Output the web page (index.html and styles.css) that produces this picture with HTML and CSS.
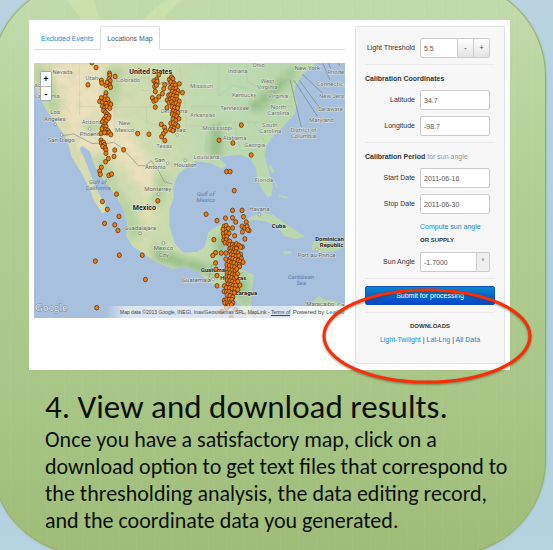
FILE: index.html
```html
<!DOCTYPE html>
<html lang="en">
<head>
<meta charset="utf-8">
<title>View and download results</title>
<link rel="stylesheet" href="styles.css">
</head>
<body>
<main class="card">
  <svg class="leaf" viewBox="0 0 140 40" aria-hidden="true">
    <path d="M5 0 Q22 20 30 40 L50 40 Q36 20 32 0Z M105 0 Q80 14 72 40 L95 40 Q98 16 120 0Z"/>
  </svg>
  <section class="panel">
    <div class="results">
      <nav class="tabs">
        <a class="tab" href="#events">Excluded Events</a>
        <a class="tab active" href="#map">Locations Map</a>
      </nav>
      <div class="map" id="map">
        <svg class="chart" viewBox="96 177 882 724" role="img" aria-label="Locations map">
          <defs>
            <clipPath id="land"><path d="M96 177H898L880 194 858 208 850 226 838 240 834 262 842 290 836 322 812 346 790 370 768 392 753 418 750 440 762 484 773 526 770 552 760 560 745 540 728 505 726 474 708 447 680 437 650 440 620 446 642 466 628 477 600 462 556 456 530 471 504 494 491 526 492 560 480 592 480 640 496 690 520 715 560 712 580 698 592 654 628 634 654 632 656 660 636 700 620 735 612 762 640 766 690 765 720 778 712 830 710 870 716 901H696L684 868 650 824 592 798 560 770 529 755 491 761 444 742 378 699 359 671 360 628 348 585 318 540 290 503 268 470 254 428 232 411 225 420 238 446 253 483 268 522 283 552 297 576 302 597 290 604 265 565 256 538 227 482 203 444 190 395 175 372 156 345 132 312 113 274 96 238Z"/><path d="M694 628 714 611 742 600 776 609 806 630 844 656 866 669 840 676 806 668 790 646 754 626 718 622ZM886 684 918 680 944 692 968 704 944 712 900 714 884 706ZM800 712 824 710 828 718 808 720ZM866 890 882 862 904 836 916 848 948 852 978 870V901H868ZM768 466l10 20-8 4-8-20ZM780 512l8 20-7-4ZM792 552l24 4-2 5-24-5Z"/></clipPath>
            <filter id="soft" x="-20%" y="-20%" width="140%" height="140%"><feGaussianBlur stdDeviation="11"/></filter>
            <filter id="relief" x="0" y="0" width="100%" height="100%">
              <feTurbulence type="fractalNoise" baseFrequency="0.035" numOctaves="4" seed="8"/>
              <feColorMatrix values="0 0 0 0 .52  0 0 0 0 .66  0 0 0 0 .42  0 0 2.6 0 -1.15"/>
            </filter>
            <linearGradient id="east"><stop offset="0" stop-color="#dfdcb4"/><stop offset=".38" stop-color="#cfdcaf"/><stop offset=".6" stop-color="#bddab0"/><stop offset="1" stop-color="#b6d5ab"/></linearGradient>
            <marker id="fix" markerUnits="userSpaceOnUse" markerWidth="18" markerHeight="18" refX="9" refY="9"><ellipse cx="9" cy="9" rx="5.8" ry="6.6"/></marker>
          </defs>
          <path fill="#a6c0de" d="M96 177H978V901H96Z"/>
          <g clip-path="url(#land)">
            <path fill="url(#east)" d="M96 177H978V901H96Z"/>
            <g filter="url(#soft)">
              <path fill="#ebe1bd" d="M150 177H300L290 260 330 330 390 400 440 480 450 560 400 540 350 470 300 430 220 420 180 340 160 260Z"/>
              <path fill="#b5d19c" d="M96 177 140 200 175 300 150 330 96 240ZM300 190 350 190 340 260 320 310 290 300ZM240 340 300 350 280 380 230 360ZM290 430 330 520 380 600 400 660 370 690 330 560 270 460ZM440 490 480 500 460 580 430 570Z"/>
              <path fill="#e2ddb4" d="M400 560 440 590 440 640 400 620ZM230 440 275 560 295 600 260 560Z"/>
              <path fill="#97c089" d="M700 300 780 230 830 190 840 205 790 265 730 320ZM430 690 520 730 600 750 640 790 560 770 440 740ZM610 680 640 650 650 700 620 750ZM630 780 700 780 705 870 670 840ZM600 350 630 350 630 440 590 440Z"/>
            </g>
            <path d="M96 177H978V901H96Z" filter="url(#relief)" opacity=".4"/>
          </g>
          <g class="borders">
            <path d="M173 384 208 378 260 405 303 405 322 402 345 418 372 446 392 468 412 468 428 454 450 484 466 514 488 520"/>
            <path d="M590 798 600 750 612 748M622 815 650 790 690 770M584 800 612 780"/>
          </g>
          <g class="states">
            <path d="M140 177V245L205 325M225 177V325M225 300 303 302V405M303 220V302H450M325 220H425V302M325 302V400M425 285H510M415 302V345L470 360 530 375M400 255H520M510 190 525 300 530 375M540 300H625M540 355H590L580 425M620 345V440M665 345 680 425M620 345H790M640 300H830M620 177V270L660 240 700 250M700 177V230L740 250M680 425H730M720 345 750 400"/>
          </g>
          <g class="leaders"><path d="M915 177 935 225M930 177 938 192M856 208 916 264M848 226 906 304M833 226 900 328M822 224 854 358M958 177 964 184"/></g>
          <g class="places">
            <text x="177" y="207">Nevada</text><text x="260" y="225">Utah</text><text x="363" y="231">Colorado</text><text x="132" y="276">California</text>
            <text x="674" y="205">Indiana</text><text x="733" y="187">Ohio</text><text x="571" y="247">Missouri</text><text x="758" y="234">West</text><text x="758" y="252">Virginia</text>
            <text x="692" y="273">Kentucky</text><text x="788" y="277">Virginia</text><text x="665" y="310">Tennessee</text><text x="789" y="307">North</text><text x="789" y="325">Carolina</text>
            <text x="574" y="329">Arkansas</text><text x="493" y="320">Oklahoma</text><text x="462" y="240">Kansas</text><text x="616" y="367">Mississippi</text><text x="765" y="358">South</text><text x="766" y="375">Carolina</text>
            <text x="665" y="396">Alabama</text><text x="722" y="416">Georgia</text><text x="585" y="448">Louisiana</text><text x="748" y="515">Florida</text><text x="465" y="418">Texas</text>
            <text x="260" y="349">Arizona</text><text x="353" y="354">New</text><text x="353" y="372">Mexico</text>
            <text x="952" y="209">Rhode</text><text x="937" y="241">Connectic.</text><text x="940" y="277">New Jers</text><text x="937" y="314">Delaware</text><text x="911" y="343">Maryland</text><text x="860" y="372">District of</text><text x="860" y="390">Columbia</text>
            <text x="712" y="892">Costa Rica</text>
          </g>
          <g class="places cities">
            <text x="871" y="196">New York</text><text x="156" y="321">Los</text><text x="155" y="341">Angeles</text><text x="173" y="402">San Diego</text><text x="256" y="385">Phoenix</text><text x="503" y="372">Dallas</text>
            <text x="453" y="457">San</text><text x="440" y="477">Antonio</text><text x="525" y="473">Houston</text><text x="447" y="540">Monterrey</text><text x="397" y="652">Guadalajara</text><text x="463" y="707">Mexico</text><text x="464" y="726">City</text>
            <text x="735" y="598">Havana</text><text x="897" y="726">Port-au-Prince</text><text x="557" y="797">Guatemala</text><text x="908" y="866">Maracaibo</text><text x="966" y="868">Ca</text><text x="106" y="246">sc</text>
          </g>
          <g class="places water">
            <text x="277" y="520">Gulf of</text><text x="278" y="538">California</text><text x="583" y="553">Gulf of</text><text x="583" y="571">Mexico</text><text x="853" y="790">Caribbean</text><text x="854" y="808">Sea</text>
          </g>
          <g class="places country">
            <text x="427" y="209" class="large">United States</text><text x="409" y="595" class="large">Mexico</text><text x="790" y="645">Cuba</text><text x="934" y="681">Dominican</text><text x="940" y="699">Republic</text><text x="610" y="769">Guatemala</text><text x="661" y="792">Honduras</text><text x="690" y="834">Nicaragua</text>
          </g>
          <g class="towns"><circle cx="156" cy="351" r="4"/><circle cx="174" cy="381" r="4"/><circle cx="254" cy="364" r="4"/><circle cx="475" cy="461" r="4"/><circle cx="525" cy="453" r="4"/><circle cx="502" cy="380" r="4"/><circle cx="449" cy="549" r="4"/><circle cx="397" cy="660" r="4"/><circle cx="463" cy="687" r="4"/><circle cx="735" cy="607" r="4"/><circle cx="898" cy="706" r="4"/><circle cx="604" cy="790" r="4"/></g>
          <text class="logo" x="99" y="881">Google</text>
          <path class="fixes" d="M260 176 272 190 249 239 326 215 310 206 311 212 309 222 312 228 307 235 311 240 313 246 300 240 287 226 288 234 303 232 300 262 298 272 287 276 282 286 290 288 297 282 305 280 309 290 314 294 300 292 290 300 296 304 303 300 311 305 293 312 299 317 304 322 309 327 300 329 307 334 294 337 300 342 290 344 297 350 292 358 300 357 289 364 299 366 305 368 303 375 309 374 314 380 286 377 296 374 286 396 287 404 293 402 296 409 291 414 298 418 300 424 325 424 350 423 300 433 323 442 307 448 299 457 287 473 282 484 284 493 308 496 316 492 330 549 290 570 304 592 337 612 296 632 325 636 334 652 338 722 403 722 270 739 412 791 274 871 447 568 390 377 422 379"/>
          <path class="fixes" d="M450 210 444 223 436 228 442 234 445 229 438 244 443 240 440 258 432 276 450 273 436 285 442 282 440 302 464 250 460 264 467 238 480 224 486 217 490 222 484 231 493 234 488 241 497 240 508 236 482 247 491 250 499 249 504 256 488 258 496 260 502 264 517 261 478 268 484 267 491 270 499 272 474 282 482 280 488 278 495 281 502 282 508 286 479 290 486 288 492 293 499 291 505 296 488 302 495 304 503 305 473 304 491 313 498 316 504 318 488 322 495 325 501 328 507 335 490 336 498 340 484 348 491 347 498 351 504 356 486 360 492 363 483 366 490 369 457 351 466 360 469 370 463 378 458 386 467 397"/>
          <path class="fixes" d="M684 353 621 396 660 404 712 438 642 485 652 485 664 539 584 606 615 624 659 595 686 595 639 617 659 616 690 613 668 628 698 628 686 640 694 644 700 640 706 652 702 650 687 656 694 676 687 699 665 667 606 678 635 640 641 638 647 646 659 645 632 649 633 661 641 657 649 660 635 670 643 669 634 680 641 679 638 687 646 688 651 683 651 693 659 692 665 695 670 690 677 694 682 699 611 715 603 723 627 716 611 744 612 762 615 780 615 809 640 716 640 733 651 704 658 702 664 705 670 703 653 712 660 714 668 713 675 716 682 720 655 721 662 723 669 725 677 724 684 731 653 731 660 732 667 735 675 737 681 740 689 742 649 740 656 744 663 744 671 748 678 749 643 749 650 752 658 754 665 756 679 754 643 761 651 763 658 765 666 767 671 761 644 772 652 773 659 776 666 778 673 775 643 782 650 784 657 786 664 789 670 784 644 793 651 795 658 797 666 799 674 796 680 807 646 804 654 806 661 808 668 808 636 809 642 814 650 815 658 817 666 818 674 820 635 825 642 826 649 826 657 829 664 829 644 835 652 837 660 841 636 850 643 848 650 848 657 848 637 857 645 858 652 858 660 857 642 868 648 865 656 863 642 872 629 882 668 877 656 900"/>
        </svg>
        <div class="zoom">
          <button type="button" aria-label="Zoom in">+</button>
          <button type="button" aria-label="Zoom out">-</button>
        </div>
        <div class="attribution">
          <span class="data">Map data ©2013 Google, INEGI, Inav/Geosistemas SRL, MapLink - <a href="#terms">Terms of</a></span>
          <span class="powered">Powered by <a href="#leaflet">Leaflet</a></span>
        </div>
      </div>
    </div>
    <form class="settings">
      <div class="row">
        <label for="threshold">Light Threshold</label>
        <div class="group"><input id="threshold" value="5.5"><button type="button" class="step">-</button><button type="button" class="step last">+</button></div>
      </div>
      <hr>
      <h2>Calibration Coordinates</h2>
      <div class="row"><label for="lat">Latitude</label><input id="lat" value="34.7"></div>
      <div class="row"><label for="lng">Longitude</label><input id="lng" value="-98.7"></div>
      <hr>
      <h2>Calibration Period <small>for sun angle</small></h2>
      <div class="row"><label for="start">Start Date</label><input id="start" value="2011-06-16"></div>
      <div class="row"><label for="stop">Stop Date</label><input id="stop" value="2011-06-30"></div>
      <div class="supply"><a href="#compute">Compute sun angle</a><strong>OR SUPPLY</strong></div>
      <div class="row">
        <label for="angle">Sun Angle</label>
        <div class="group"><input id="angle" value="-1.7000"><span class="unit">°</span></div>
      </div>
      <hr>
      <button type="submit" class="submit">Submit for processing</button>
      <hr>
      <div class="downloads">
        <strong>DOWNLOADS</strong>
        <div><a href="#light">Light-Twilight</a> | <a href="#latlng">Lat-Lng</a> | <a href="#all">All Data</a></div>
      </div>
      <svg class="ring" viewBox="0 0 212 100" aria-hidden="true"><ellipse cx="106" cy="49" rx="103" ry="46"/></svg>
    </form>
  </section>
  <section class="caption">
    <h1>4. View and download results.</h1>
    <p>Once you have a satisfactory map, click on a download option to get text files that correspond to the thresholding analysis, the data editing record, and the coordinate data you generated.</p>
  </section>
</main>
</body>
</html>
```
FILE: styles.css
```css
* { box-sizing: border-box; }

body {
  margin: 0;
  min-height: 100vh;
  overflow: hidden;
  background: linear-gradient(#b9d3e0, #acd0dc 50%, #b4d2df);
  font: 7px/10px "Liberation Sans", Arial, sans-serif;
  color: #333;
}

.card {
  position: relative;
  margin: -19px 7px -5px -9px;
  min-height: calc(100vh + 24px);
  padding: 38px 35px 0 37px;
  border: 1px solid #93ad66;
  border-radius: 95px;
  background:
    repeating-linear-gradient(90deg, rgb(255 255 255 / 5%) 0 1px, transparent 1px 18px),
    linear-gradient(#c3dbae, #b2d094 35%, #a9c788 68%, #9fbc78);
  box-shadow: 0 0 2px #8fa66a;
}

.leaf {
  position: absolute;
  top: 18px;
  left: 70px;
  width: 140px;
  fill: #d2e3ae;
  opacity: .7;
}

.panel {
  position: relative;
  display: flex;
  gap: 10px;
  padding: 6px 5px;
  background: #fff;
}

.results { flex: 1; min-width: 0; }

a { color: #1689cc; text-decoration: none; }

.tabs {
  display: flex;
  height: 24px;
  margin-bottom: 13px;
  border-bottom: 1px solid #ddd;
}

.tab { height: 24px; padding: 7px 6px; border: 1px solid transparent; }

.tab.active {
  color: #555;
  background: #fff;
  border-color: #ddd #ddd #fff;
  border-radius: 2px 2px 0 0;
}

.map { position: relative; overflow: hidden; }
.chart { display: block; width: 100%; }

.borders path { fill: none; stroke: #8f9483; stroke-width: 2; }
.states path { fill: none; stroke: #a2ab93; stroke-width: 1; opacity: .6; }
.leaders path { fill: none; stroke: #7b8589; stroke-width: 2; }

.places {
  font: 17px Roboto, sans-serif;
  text-anchor: middle;
  fill: #6d726e;
  stroke: #f2f4ea;
  stroke-opacity: .65;
  stroke-width: 3px;
  paint-order: stroke;
}

.cities { fill: #5f625e; }
.water { font-style: italic; fill: #5b7ca9; stroke: none; }
.country { font-weight: 700; fill: #222; }
.large { font-size: 20px; }
.towns circle { fill: #eee; stroke: #777; stroke-width: 1.5px; }

.logo {
  font: 31px "Liberation Serif", serif;
  fill: #dfe8f2;
  stroke: #7f8ea2;
  stroke-width: 3px;
  paint-order: stroke;
}

.fixes { fill: none; marker: url(#fix); }
#fix ellipse { fill: #f27d0c; stroke: #4a2c0a; stroke-width: 2px; }

.zoom {
  position: absolute;
  top: 8px;
  left: 6px;
  width: 12px;
  border: 1px solid #aaa;
  border-radius: 2px;
  overflow: hidden;
}

.zoom button {
  display: block;
  width: 100%;
  height: 14px;
  padding: 0;
  border: 0;
  background: #fff;
  font: bold 9px/12px "Liberation Sans", sans-serif;
  color: #000;
}

.zoom button + button { border-top: 1px solid #bbb; }

.attribution {
  position: absolute;
  right: 0;
  bottom: 0;
  left: 72px;
  display: flex;
  height: 12px;
  background: linear-gradient(90deg, transparent, rgb(255 255 255 / 60%) 20px);
  line-height: 12px;
  white-space: nowrap;
  color: #444;
}

.data { flex: 1; padding-left: 14px; font-size: 5px; }
.data a { color: #444; text-decoration: underline; }
.powered { padding: 0 1px 0 2px; background: rgb(255 255 255 / 60%); font-size: 6px; }

.settings {
  position: relative;
  width: 150px;
  padding: 11px 9px 18px;
  border: 1px solid #e3e3e3;
  border-radius: 2px;
  background: #f7f7f7;
}

.row {
  display: grid;
  grid-template-columns: 50px 70px;
  gap: 5px;
  align-items: center;
  margin-bottom: 6px;
  text-align: right;
}

.row label { white-space: nowrap; }

input {
  width: 100%;
  min-width: 0;
  height: 20px;
  padding: 0 3px;
  border: 1px solid #ccc;
  border-radius: 2px;
  background: #fff;
  font: inherit;
  color: #555;
}

.group { display: flex; }
.group input { flex: 1; border-radius: 2px 0 0 2px; }

.step, .unit {
  width: 16px;
  height: 20px;
  padding: 0;
  border: 1px solid #ccc;
  border-left: 0;
  background: linear-gradient(#fff, #e4e4e4);
  font: inherit;
  line-height: 18px;
  color: #333;
  text-align: center;
}

.last { border-radius: 0 2px 2px 0; }
.unit { width: 13px; background: #eee; border-radius: 0 2px 2px 0; }

hr { height: 1px; margin: 0; border: 0; background: #eaeaea; }

h2 { margin: 0; padding: 9px 0 6px; font-size: 7px; line-height: 10px; white-space: nowrap; }
h2 small { font-size: 7px; font-weight: 400; color: #999; }

.supply {
  display: flex;
  flex-direction: column;
  gap: 3px;
  margin: 8px 0 7px 55px;
}

.supply strong, .downloads strong { font-size: 6px; }

.submit {
  width: 100%;
  height: 19px;
  margin: 7px 0;
  padding: 0;
  border: 1px solid #0a53c0;
  border-radius: 2px;
  background: linear-gradient(#0a86cc, #0545cc);
  font: inherit;
  color: #fff;
}

.downloads {
  display: flex;
  flex-direction: column;
  gap: 4px;
  padding-top: 8px;
  text-align: center;
}

.ring {
  position: absolute;
  bottom: -24px;
  left: -35px;
  width: 212px;
  height: 100px;
  overflow: visible;
  pointer-events: none;
}

.ring ellipse {
  fill: none;
  stroke: #fb2c07;
  stroke-width: 3px;
  filter: drop-shadow(0 1px 1px rgb(60 60 30 / 60%));
}

.caption { padding: 18px 0 0 16px; color: #0c0f08; font-family: Carlito, Calibri, Lato, sans-serif; }
.caption h1 { margin: 0; font-size: 33px; font-weight: 400; line-height: 38px; }
.caption p { margin: 0 -8px 0 0; font-size: 22px; line-height: 27px; }
```
